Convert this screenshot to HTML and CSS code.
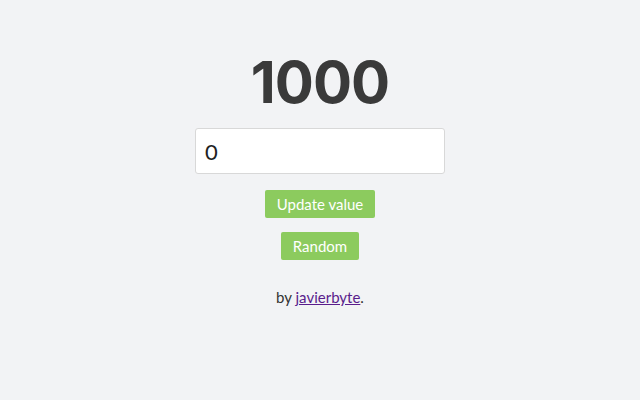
FILE: index.html
```html
<!DOCTYPE html>
<html>
<head>
<meta charset="utf-8">
<link rel="stylesheet" href="styles.css">
</head>
<body>
<main class="app">
  <h1 class="counter">1000</h1>
  <input class="value-input" type="text" value="0">
  <button class="btn">Update value</button>
  <button class="btn">Random</button>
  <p class="credit">by <a href="#" class="credit-link">javierbyte</a>.</p>
</main>
</body>
</html>
```

FILE: styles.css
```css
html, body {
  margin: 0;
  padding: 0;
  background: #f2f3f5;
  font-family: "Lato", "Open Sans", sans-serif;
}
.app {
  display: flex;
  flex-direction: column;
  align-items: center;
  padding-top: 50px;
}
.counter {
  margin: 0;
  font-family: "Inter", "Lato", sans-serif;
  font-size: 58px;
  line-height: 64px;
  font-weight: 700;
  color: #3a3a3a;
  letter-spacing: -1px;
}
.value-input {
  margin-top: 14px;
  box-sizing: border-box;
  width: 250px;
  height: 46px;
  border: 1px solid #d8d8d8;
  border-radius: 3px;
  background: #fff;
  padding: 0 9px;
  font-family: "Lato", sans-serif;
  font-size: 22px;
  color: #222;
  outline: none;
}
.btn {
  margin-top: 16px;
  height: 28px;
  padding: 0 12px;
  border: none;
  border-radius: 2px;
  background: #8ccb5e;
  color: #fff;
  font-family: "Lato", sans-serif;
  font-size: 15px;
}
.btn + .btn {
  margin-top: 14px;
}
.credit {
  margin: 28px 0 0;
  font-size: 15px;
  color: #333;
}
.credit-link {
  color: #5a1d8c;
}
```
